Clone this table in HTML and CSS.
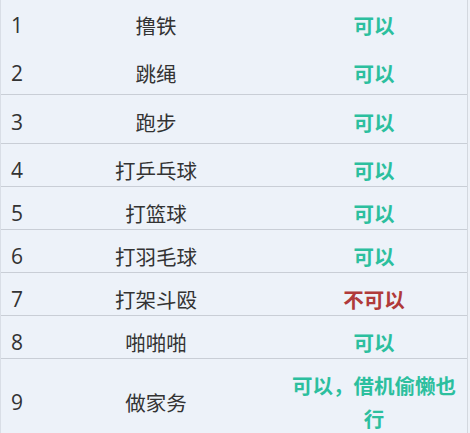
FILE: index.html
```html
<!DOCTYPE html>
<html lang="zh-CN">
<head>
<meta charset="utf-8">
<title>运动表</title>
<link rel="stylesheet" href="styles.css">
</head>
<body>
<table class="sheet">
  <colgroup>
    <col class="c-num">
    <col class="c-name">
    <col class="c-ok">
  </colgroup>
  <tbody>
    <tr class="row row-first"><td class="num">1</td><td class="name">撸铁</td><td class="ok yes">可以</td></tr>
    <tr class="row row-tall"><td class="num">2</td><td class="name">跳绳</td><td class="ok yes">可以</td></tr>
    <tr class="row row-tall"><td class="num">3</td><td class="name">跑步</td><td class="ok yes">可以</td></tr>
    <tr class="row"><td class="num">4</td><td class="name">打乒乓球</td><td class="ok yes">可以</td></tr>
    <tr class="row"><td class="num">5</td><td class="name">打篮球</td><td class="ok yes">可以</td></tr>
    <tr class="row"><td class="num">6</td><td class="name">打羽毛球</td><td class="ok yes">可以</td></tr>
    <tr class="row"><td class="num">7</td><td class="name">打架斗殴</td><td class="ok no">不可以</td></tr>
    <tr class="row"><td class="num">8</td><td class="name">啪啪啪</td><td class="ok yes">可以</td></tr>
    <tr class="row row-last"><td class="num">9</td><td class="name">做家务</td><td class="ok yes">可以，借机偷懒也行</td></tr>
  </tbody>
</table>
</body>
</html>
```

FILE: styles.css
```css
html, body {
  margin: 0;
  padding: 0;
  background: #eef2f8;
}

body {
  font-family: "Noto Sans CJK SC", "Open Sans", sans-serif;
  color: #333333;
  overflow: hidden;
}

.sheet {
  width: 467px;
  border-collapse: separate;
  border-spacing: 0;
  table-layout: fixed;
  background: #edf2f9;
  border-left: 1px solid #d9dee6;
  border-right: 1px solid #d3d8df;
}

.c-num { width: 30px; }
.c-name { width: 250px; }
.c-ok { width: 186px; }

.row td {
  padding: 10px 8px 0;
  line-height: 32px;
  font-size: 20.5px;
  vertical-align: middle;
  border-bottom: 1px solid #c9ced6;
}

.row-tall td {
  padding-top: 11px;
  padding-bottom: 5px;
}

.row-first td {
  padding-top: 9px;
  padding-bottom: 5px;
  border-bottom: none;
}

.row-last td {
  padding-top: 10px;
  padding-bottom: 14px;
  line-height: 33px;
  border-bottom: none;
}

.num {
  text-align: left;
  padding-left: 10px !important;
  padding-right: 0 !important;
  font-family: "Open Sans", "Noto Sans CJK SC", sans-serif;
  font-size: 21px !important;
  color: #333333;
}

.name {
  text-align: center;
  color: #333333;
}

.ok {
  text-align: center;
  font-weight: 700;
}

.yes { color: #2cbf9e; }
.no { color: #b03a3a; }
```
